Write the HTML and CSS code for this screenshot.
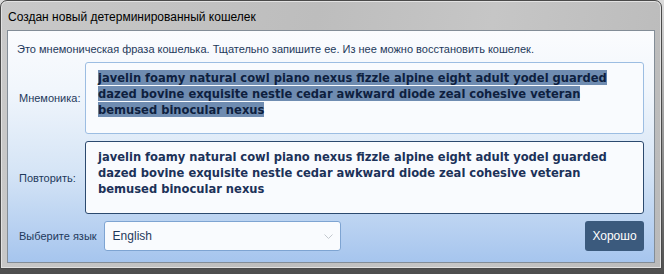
FILE: index.html
```html
<!DOCTYPE html>
<html lang="ru">
<head>
  <meta charset="UTF-8" />
  <title>Создан новый детерминированный кошелек</title>
  <link rel="stylesheet" href="styles.css">
</head>
<body>

<div class="window">
  <div class="titlebar">Создан новый детерминированный кошелек</div>

  <div class="client">
    <p class="intro">Это мнемоническая фраза кошелька. Тщательно запишите ее. Из нее можно восстановить кошелек.</p>

    <div class="field">
      <span class="label">Мнемоника:</span>
      <div class="memo"><span class="selected">javelin foamy natural cowl piano nexus fizzle alpine eight adult yodel guarded dazed bovine exquisite nestle cedar awkward diode zeal cohesive veteran bemused binocular nexus</span></div>
    </div>

    <div class="field">
      <span class="label">Повторить:</span>
      <div class="memo focused">javelin foamy natural cowl piano nexus fizzle alpine eight adult yodel guarded dazed bovine exquisite nestle cedar awkward diode zeal cohesive veteran bemused binocular nexus</div>
    </div>

    <div class="footer-row">
      <span class="label">Выберите язык</span>
      <div class="select">
        English
        <svg class="chevron" width="9" height="5" viewBox="0 0 9 5"><path d="M0.5 0.5 L4.5 4.5 L8.5 0.5" fill="none" stroke="#c3c8ce" stroke-width="1"/></svg>
      </div>
      <button class="ok-button">Хорошо</button>
    </div>
  </div>
</div>

</body>
</html>
```

FILE: styles.css
```css
html {
  background: linear-gradient(#dcdcdc, #8a8a8a 60%, #4e4e4e);
}
body {
  margin: 0;
  width: 664px;
  height: 274px;
  overflow: hidden;
  font-family: "Liberation Sans", Arial, sans-serif;
}

/* рамка окна */
.window {
  width: 662px;
  height: 269px;
  box-sizing: border-box;
  border: 1px solid #4a4a4a;
  border-radius: 7px 7px 0 0;
  background: linear-gradient(100deg, #c9c9c9 0%, #bdbdbd 45%, #c6c6c6 70%, #bababa 100%);
  box-shadow: inset 0 0 0 1px #e2e2e2;
  padding: 0 6px 5px 6px;
  display: flex;
  flex-direction: column;
}
.titlebar {
  height: 29px;
  line-height: 32px;
  padding-left: 1px;
  font-size: 12px;
  color: #000;
}

.client {
  flex: 1;
  border: 1px solid #838d97;
  background: linear-gradient(#fbfcfe 0%, #f1f6fc 25%, #d6e5f6 60%, #a6c5ee 100%);
  padding: 0 10px 11px 9px;
  display: flex;
  flex-direction: column;
  color: #1e395b;
}
.intro {
  margin: 11px 0 6px 0;
  font-size: 11px;
  line-height: 14px;
}

.field {
  display: flex;
  align-items: center;
  margin-bottom: 7px;
}
.label {
  font-size: 11px;
  padding-left: 2px;
}
.field .label {
  width: 66px;
}

.memo {
  flex: 1;
  height: 72px;
  box-sizing: border-box;
  border: 1px solid #9cbde2;
  border-radius: 3px;
  background: #f9fbfe;
  padding: 7px 12px;
  font-family: "DejaVu Sans Condensed", "DejaVu Sans", sans-serif;
  font-weight: bold;
  font-size: 12.8px;
  line-height: 16px;
  color: #1c3259;
}
.memo.focused {
  height: 73px;
  border-color: #2c4a6f;
}
.selected {
  background: #6f8cb1;
  color: #0e1f3f;
}

.footer-row {
  display: flex;
  align-items: center;
}
.select {
  margin-left: 7px;
  width: 237px;
  height: 30px;
  box-sizing: border-box;
  border: 1px solid #7ea4d2;
  border-radius: 3px;
  background: #f9fbfe;
  padding: 0 7px 0 8px;
  font-size: 12px;
  color: #1e395b;
  display: flex;
  align-items: center;
  justify-content: space-between;
}
.ok-button {
  margin-left: auto;
  width: 59px;
  height: 30px;
  border: none;
  border-radius: 3px;
  background: #3b5a7d;
  color: #fff;
  font-family: "Liberation Sans", Arial, sans-serif;
  font-size: 12px;
  padding: 0;
}
```
